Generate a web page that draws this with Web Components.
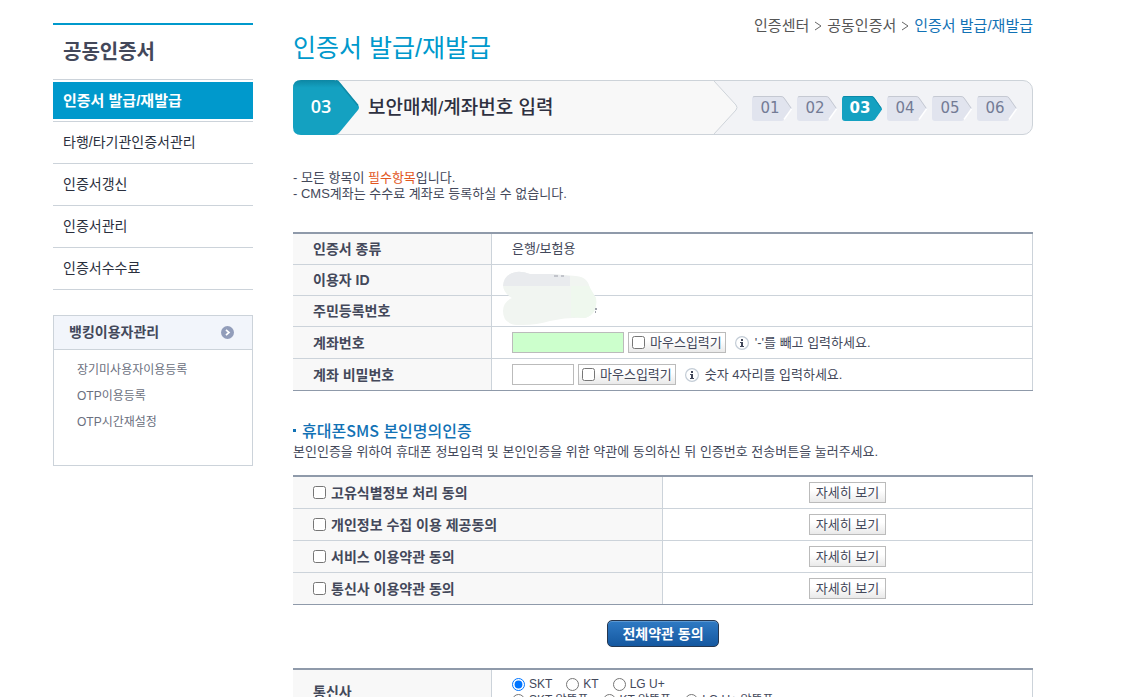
<!DOCTYPE html>
<html lang="ko">
<head>
<meta charset="utf-8">
<title>인증서 발급/재발급</title>
<style>
  html { overflow: hidden; height: 100%; }
  body {
    margin: 0;
    background: #fff;
    color: #43485a;
    font: 13px/16px "Liberation Sans", "Noto Sans CJK KR", sans-serif;
    --accent: #0099cc;
    --line: #ccd3da;
    --line-dark: #8f9aaa;
    --cell: #f8f8f8;
    --link: #1272b5;
  }
</style>
</head>
<body>
<cert-page>
  <cert-menu slot="side"></cert-menu>
  <side-box slot="side" heading="뱅킹이용자관리">
    <a href="#unused">장기미사용자이용등록</a>
    <a href="#otp">OTP이용등록</a>
    <a href="#time">OTP시간재설정</a>
  </side-box>
  <page-head></page-head>
  <step-bar current="3" total="6">보안매체/계좌번호 입력</step-bar>
  <notice-list></notice-list>
  <account-table></account-table>
  <section-head>
    휴대폰SMS 본인명의인증
    <span slot="desc">본인인증을 위하여 휴대폰 정보입력 및 본인인증을 위한 약관에 동의하신 뒤 인증번호 전송버튼을 눌러주세요.</span>
  </section-head>
  <terms-table></terms-table>
  <main-button>전체약관 동의</main-button>
  <carrier-table></carrier-table>
</cert-page>

<script>
const tableCss = `
  :host { display: block; }
  table { width: 100%; border-spacing: 0; border-top: 2px solid var(--line-dark); border-bottom: 1px solid var(--line-dark); table-layout: fixed; }
  th, td { box-sizing: border-box; padding: 0 20px; height: 31px; border-right: 1px solid var(--line); border-bottom: 1px solid var(--line); text-align: left; }
  th { background: var(--cell); font-size: 14px; font-weight: bold; }
  tr:last-child > * { border-bottom: 0; }
  col.head { width: 199px; }
  input[type=checkbox], input[type=radio] { width: 13px; height: 13px; margin: 0; flex: none; }
`;

function define(name, html, setup) {
  const template = document.createElement('template');
  template.innerHTML = html;
  customElements.define(name, class extends HTMLElement {
    constructor() {
      super();
      this.attachShadow({ mode: 'open' }).append(template.content.cloneNode(true));
    }
    connectedCallback() { if (setup) setup(this, this.shadowRoot); }
  });
}

define('cert-page', `
  <style>
    :host { display: flex; gap: 40px; padding: 0 90px 0 53px; }
    aside { flex: 0 0 200px; padding-top: 23px; }
    main { flex: 1; min-width: 0; padding-top: 16px; }
  </style>
  <aside><slot name="side"></slot></aside>
  <main><slot></slot></main>`);

define('cert-menu', `
  <style>
    :host { display: block; border-top: 2px solid var(--accent); }
    h2 { margin: 0; padding-left: 10px; font-size: 20px; line-height: 54px; border-bottom: 1px solid var(--line); }
    ul { margin: 0; padding: 0; list-style: none; }
    li { padding: 2px 0; border-bottom: 1px solid var(--line); }
    a { display: block; padding-left: 10px; font-size: 14px; line-height: 37px; color: #2a2f3d; text-decoration: none; }
    a[aria-current] { background: var(--accent); color: #fff; font-size: 15px; font-weight: bold; }
  </style>
  <h2>공동인증서</h2>
  <nav><ul>
    <li><a href="#issue" aria-current="page">인증서 발급/재발급</a></li>
    <li><a href="#other">타행/타기관인증서관리</a></li>
    <li><a href="#renew">인증서갱신</a></li>
    <li><a href="#manage">인증서관리</a></li>
    <li><a href="#fee">인증서수수료</a></li>
  </ul></nav>`);

define('side-box', `
  <style>
    :host { display: block; margin-top: 25px; border: 1px solid var(--line); }
    h3 { display: flex; align-items: center; justify-content: space-between; margin: 0; padding: 0 18px 0 15px; font-size: 14px; line-height: 33px; background: #f2f5fb; border-bottom: 1px solid var(--line); }
    div { display: flex; flex-direction: column; padding: 7px 23px 30px; }
    ::slotted(a) { font-size: 12px; line-height: 26px; color: #6b7080; text-decoration: none; }
  </style>
  <h3><span></span>
    <svg width="13" height="13" viewBox="0 0 13 13"><circle cx="6.5" cy="6.5" r="6.5" fill="#929dba"/><path d="M5 3.8 8 6.5 5 9.2" fill="none" stroke="#fff" stroke-width="1.7"/></svg>
  </h3>
  <div><slot></slot></div>`,
  (host, root) => { root.querySelector('span').textContent = host.getAttribute('heading'); });

define('page-head', `
  <style>
    :host { display: flex; justify-content: space-between; align-items: flex-start; }
    h1 { margin: 0; font-weight: normal; font-size: 25px; line-height: 64px; color: var(--accent); }
    nav { display: flex; gap: 5px; font-size: 15px; line-height: 20px; }
    a { color: #555; text-decoration: none; }
    a:last-child { color: var(--link); }
    svg { align-self: center; }
  </style>
  <h1>인증서 발급/재발급</h1>
  <nav aria-label="현재 위치">
    <a href="#center">인증센터</a>
    <svg width="8" height="10" viewBox="0 0 8 10"><path d="M1 1 7 5 1 9" fill="none" stroke="#666"/></svg>
    <a href="#joint">공동인증서</a>
    <svg width="8" height="10" viewBox="0 0 8 10"><path d="M1 1 7 5 1 9" fill="none" stroke="#666"/></svg>
    <a href="#issue">인증서 발급/재발급</a>
  </nav>`);

define('step-chip', `
  <style>
    :host { display: grid; width: 40px; height: 25px; color: #737b95; font: 15px/25px "DejaVu Sans", sans-serif; --fill: #e1e4ee; --edge: #c5c9d2; --glow: #fff; }
    :host([active]) { color: #fff; font-weight: bold; --fill: #14a1c1; --edge: #0b89a8; --glow: #14a1c1; }
    svg, span { grid-area: 1 / 1; }
    span { padding-right: 4px; text-align: center; }
  </style>
  <svg width="40" height="25" viewBox="0 0 40 25">
    <path d="M3 0H29Q31 0 32 1L40 12.5 32 24Q31 25 29 25H3Q0 25 0 22V3Q0 0 3 0Z" fill="var(--fill)"/>
    <path d="M1 1Q2 .5 3 .5H29Q31 .5 32 2L39 12" fill="none" stroke="var(--edge)"/>
    <path d="M39.5 13 32 23.5" fill="none" stroke="var(--glow)" stroke-width="1.5"/>
  </svg>
  <span><slot></slot></span>`);

define('step-bar', `
  <style>
    :host { display: flex; align-items: stretch; height: 53px; border: 1px solid #cdd3d9; border-radius: 10px; background: #f2f3f6; }
    .now { position: relative; z-index: 1; flex: none; width: 66px; margin: -1px 0 -1px -1px; }
    .now svg { display: block; }
    .now b { position: absolute; inset: 0 10px 0 0; text-align: center; color: #fff; font: 600 18px/53px "Open Sans", sans-serif; }
    h2 { flex: 1; margin: 0 0 0 -20px; padding-left: 29px; background: #f8f8f8; color: #2e3040; font-size: 19px; font-weight: 500; line-height: 54px; }
    .end { flex: none; width: 24px; }
    ol { display: flex; gap: 5px; align-items: center; margin: 0; padding: 2px 15px 0 14px; list-style: none; }
  </style>
  <div class="now">
    <svg width="66" height="55" viewBox="0 0 66 55">
      <defs>
        <linearGradient id="g" x1="0" y1="0" x2="0" y2="1"><stop offset="0" stop-color="#0d87a4"/><stop offset=".14" stop-color="#14a1c1"/></linearGradient>
      </defs>
      <path d="M8 0H41Q44 0 46 2L65 25Q67 27.500 65 30L46 53Q44 55 41 55H8Q0 55 0 47V8Q0 0 8 0Z" fill="url(#g)"/>
      <path d="M43 .5Q45 1 46 2.500L65 25.500" fill="none" stroke="#0f8ba8" stroke-width="1.500"/>
    </svg>
    <b></b>
  </div>
  <h2><slot></slot></h2>
  <svg class="end" width="24" height="53" viewBox="0 0 24 53"><path d="M0 0 22 24Q24 26.500 22 29L0 53Z" fill="#f8f8f8"/><path d="M0 0 22 24Q24 26.500 22 29L0 53" fill="none" stroke="#cfd4da"/></svg>
  <ol></ol>`,
  (host, root) => {
    const current = Number(host.getAttribute('current'));
    const two = n => String(n).padStart(2, '0');
    root.querySelector('b').textContent = two(current);
    const list = root.querySelector('ol');
    list.replaceChildren();
    for (let n = 1; n <= Number(host.getAttribute('total')); n++) {
      const item = document.createElement('li');
      const chip = document.createElement('step-chip');
      chip.textContent = two(n);
      if (n === current) chip.setAttribute('active', '');
      item.append(chip);
      list.append(item);
    }
  });

define('notice-list', `
  <style>
    :host { display: block; margin: 35px 0 30px; }
    p { margin: 0; }
    em { font-style: normal; color: #e2571e; }
  </style>
  <p>- 모든 항목이 <em>필수항목</em>입니다.</p>
  <p>- CMS계좌는 수수료 계좌로 등록하실 수 없습니다.</p>`);

define('info-icon', `
  <style>:host { display: block; flex: none; width: 14px; height: 14px; } svg { display: block; }</style>
  <svg width="14" height="14" viewBox="0 0 14 14"><circle cx="7" cy="7" r="6.400" fill="#fff" stroke="#c3ccd6" stroke-width="1.200"/><path d="M6 3h2v2H6zM5 6h3v4h1v1H5v-1h1V7H5z" fill="#43485a"/></svg>`);

define('account-table', `
  <style>${tableCss}
    tr.field > * { height: 32px; }
    tr.field:last-child > * { height: 31px; }
    .row { display: flex; align-items: center; gap: 4px; }
    .text { box-sizing: border-box; width: 112px; height: 21px; padding: 0 4px; border: 1px solid #bbb; background: #fff; font: inherit; }
    .text.on { background: #ccffcc; }
    .text.short { width: 62px; }
    label.key { box-sizing: border-box; display: flex; align-items: center; gap: 5px; height: 21px; padding: 0 3px; border: 1px solid #bbb; background: linear-gradient(#fff 40%, #e9e9e9); }
    info-icon { margin: 0 2px 0 5px; }
    .masked { position: relative; }
    .masked svg { position: absolute; left: 10px; top: 6px; }
  </style>
  <table>
    <colgroup><col class="head"><col></colgroup>
    <tr><th scope="row">인증서 종류</th><td>은행/보험용</td></tr>
    <tr><th scope="row">이용자 ID</th><td class="masked">
      <svg width="96" height="56" viewBox="0 0 96 56" aria-hidden="true">
        <path d="M14 1Q20 0 28 3H50L74 5Q87 6 88 19L94 27Q96 43 83 47 66 46 48 50 35 54 20 54 1 55 1 40 1 31 10 27 1 22 1 14 2 3 14 1Z" fill="#f1f5f1"/>
        <path d="M14 1Q20 0 28 3H50L68 5V15H1Q2 3 14 1Z" fill="#e9ebee"/>
        <path d="M69 15H87L94 27Q96 43 83 47L69 46Z" fill="#eff8ee"/>
        <path d="M52 5h4M59 5h3" stroke="#9a9da8"/>
        <path d="M93 38h2M93 41h1" stroke="#43485a"/>
      </svg></td></tr>
    <tr><th scope="row">주민등록번호</th><td></td></tr>
    <tr class="field"><th scope="row"><label for="acct">계좌번호</label></th><td><div class="row">
      <input class="text on" id="acct" type="text">
      <label class="key"><input type="checkbox">마우스입력기</label>
      <info-icon></info-icon><span>'-'를 빼고 입력하세요.</span></div></td></tr>
    <tr class="field"><th scope="row"><label for="pw">계좌 비밀번호</label></th><td><div class="row">
      <input class="text short" id="pw" type="password">
      <label class="key"><input type="checkbox">마우스입력기</label>
      <info-icon></info-icon><span>숫자 4자리를 입력하세요.</span></div></td></tr>
  </table>`);

define('section-head', `
  <style>
    :host { display: block; margin: 29px 0 15px; }
    h2 { display: flex; align-items: center; gap: 6px; margin: 0 0 4px; font-family: "Noto Sans CJK KR", sans-serif; font-size: 16px; font-weight: 500; line-height: 20px; color: var(--link); }
    h2::before { content: ""; width: 3px; height: 3px; background: var(--link); }
    p { margin: 0; }
  </style>
  <h2><span><slot></slot></span></h2>
  <p><slot name="desc"></slot></p>`);

define('terms-table', `
  <style>${tableCss}
    th, td { height: 32px; }
    tr:last-child > * { height: 31px; }
    td { text-align: center; }
    label { display: flex; align-items: center; gap: 5px; }
    button { box-sizing: border-box; display: block; margin: 0 auto; height: 21px; padding: 0 6px; border: 1px solid #bbb; background: linear-gradient(#fff 40%, #e9e9e9); color: inherit; font: inherit; line-height: 19px; }
  </style>
  <table>
    <tr><th scope="row"><label><input type="checkbox">고유식별정보 처리 동의</label></th><td><button type="button">자세히 보기</button></td></tr>
    <tr><th scope="row"><label><input type="checkbox">개인정보 수집 이용 제공동의</label></th><td><button type="button">자세히 보기</button></td></tr>
    <tr><th scope="row"><label><input type="checkbox">서비스 이용약관 동의</label></th><td><button type="button">자세히 보기</button></td></tr>
    <tr><th scope="row"><label><input type="checkbox">통신사 이용약관 동의</label></th><td><button type="button">자세히 보기</button></td></tr>
  </table>`);

define('main-button', `
  <style>
    :host { display: flex; justify-content: center; margin: 15px 0 21px; }
    button { box-sizing: border-box; height: 27px; padding: 0 14px; border: 1px solid #26374f; border-radius: 5px; background: linear-gradient(#2f7ac4, #1558a0); box-shadow: inset 0 1px #5b98d3; color: #fff; font: inherit; font-size: 14px; font-weight: bold; line-height: 24px; }
  </style>
  <button type="button"><slot></slot></button>`);

define('carrier-table', `
  <style>${tableCss}
    td { padding: 6px 20px; font-size: 12px; }
    div { display: flex; gap: 14px; }
    label { display: flex; align-items: center; gap: 4px; }
  </style>
  <table>
    <colgroup><col class="head"><col></colgroup>
    <tr><th scope="row">통신사</th><td>
      <div>
        <label><input type="radio" name="carrier" checked>SKT</label>
        <label><input type="radio" name="carrier">KT</label>
        <label><input type="radio" name="carrier">LG U+</label>
      </div>
      <div>
        <label><input type="radio" name="carrier">SKT 알뜰폰</label>
        <label><input type="radio" name="carrier">KT 알뜰폰</label>
        <label><input type="radio" name="carrier">LG U+ 알뜰폰</label>
      </div></td></tr>
  </table>`);
</script>
</body>
</html>
